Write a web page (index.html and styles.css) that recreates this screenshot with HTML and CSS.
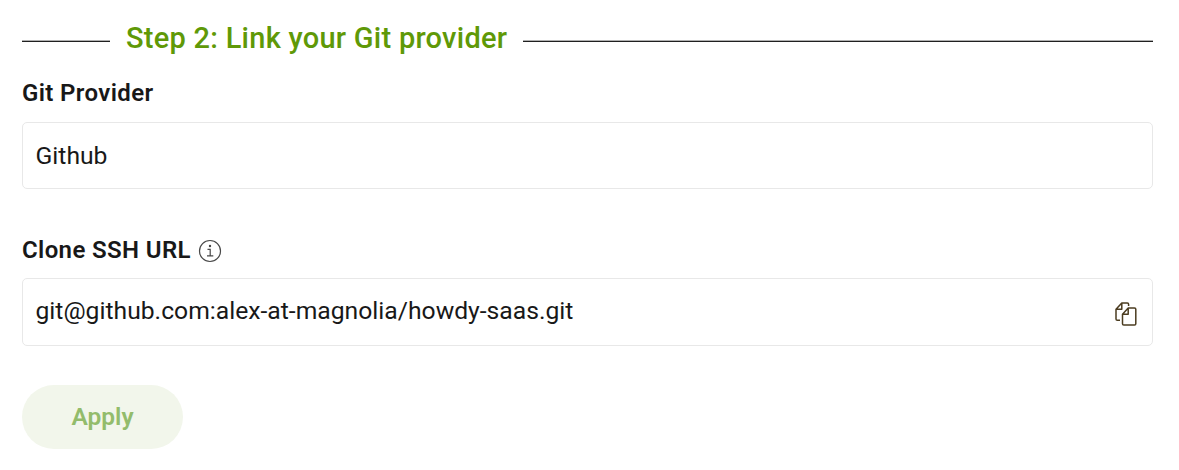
FILE: index.html
```html
<!DOCTYPE html>
<html lang="en">
<head>
<meta charset="utf-8">
<title>Link your Git provider</title>
<link rel="stylesheet" href="styles.css">
</head>
<body>
<form class="step">
  <h2 class="step-title"><span>Step 2: Link your Git provider</span></h2>
  <div class="label"><span class="label-text">Git Provider</span></div>
  <div class="field field-provider"><span class="value">Github</span></div>
  <div class="label label-url"><span class="label-text">Clone SSH URL</span>
    <svg class="info" viewBox="0 0 24 24" fill="none" stroke="#484848" stroke-width="1.2"><circle cx="12" cy="12" r="10.5"/><path d="M9.500 10.300h2.700v6.500M9 16.800h6.300"/><circle cx="12" cy="7" r=".6" fill="#484848"/></svg>
  </div>
  <div class="field field-url"><span class="value">git@github.com:alex-at-magnolia/howdy-saas.git</span>
    <svg class="copy" viewBox="0 0 22 24" fill="none" stroke="#4b3c20" stroke-width="1.500" stroke-linejoin="round"><path d="M5 18.300H2.300Q1 18.300 1 17V7.300L6.800 1H12.300Q13.600 1 13.600 2.300V4M1.200 7.300H6.800V1"/><path d="M7.500 12.200L13.200 6H19.500Q20.800 6 20.800 7.300V21.700Q20.800 23 19.500 23H8.800Q7.500 23 7.500 21.700ZM7.700 12.200H13.200V6"/></svg>
  </div>
  <button class="apply" type="button">Apply</button>
</form>
</body>
</html>
```
FILE: styles.css
```css
body { margin: 0; background: #fff; color: #181818; font-family: Roboto, sans-serif; }
.step { padding: 18px 26px 0 22px; display: flex; flex-direction: column; align-items: stretch; }
.step-title { margin: 0; height: 40px; display: flex; align-items: center; gap: 16px; font-size: 29px; line-height: 40px; font-weight: 500; letter-spacing: .26px; color: #5f9907; white-space: nowrap; }
.step-title::before, .step-title::after { content: ""; height: 2px; background: linear-gradient(#b0b0b0 50%, #202020 50%); margin-top: 5px; }
.step-title::before { width: 88px; }
.step-title::after { flex: 1; }
.label { display: flex; align-items: center; gap: 7px; height: 30px; margin-top: 20px; font-size: 24px; font-weight: 600; line-height: 30px; letter-spacing: .37px; }
.label-url { margin-top: 46px; }
.info { width: 24px; height: 24px; margin-top: 2px; }
.field { box-sizing: border-box; display: flex; align-items: center; justify-content: space-between; border: 1px solid #e8e8e8; border-radius: 5px; padding: 0 15px 0 12.5px; font-size: 24.7px; }
.field-provider { height: 67px; margin-top: 14px; }
.field-url { height: 68px; margin-top: 13px; }
.field-url .value { margin-bottom: 3px; }
.copy { width: 22px; height: 24px; margin-top: 4px; }
.apply { width: 161px; height: 64px; margin-top: 39px; padding: 0 0 2px; border: 0; border-radius: 32px; background: #f2f6eb; color: #93bc6b; font: 600 24.5px Roboto, sans-serif; }
```
